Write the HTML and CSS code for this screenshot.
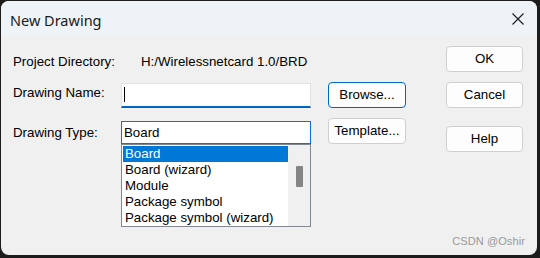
FILE: index.html
```html
<!DOCTYPE html>
<html>
<head>
<meta charset="utf-8">
<link rel="stylesheet" href="styles.css">
</head>
<body>
<div class="window">
  <div class="titlebar">
    <span class="title">New Drawing</span>
    <span class="close">
      <svg width="12" height="12" viewBox="0 0 12 12"><path d="M0.5 0.5 L11.5 11.5 M11.5 0.5 L0.5 11.5" stroke="#1a1a1a" stroke-width="1.1" fill="none"/></svg>
    </span>
  </div>
  <div class="body">
    <div class="form">
      <div class="row row-dir">
        <span class="label">Project Directory:</span>
        <span class="value">H:/Wirelessnetcard 1.0/BRD</span>
      </div>
      <div class="row row-name">
        <span class="label">Drawing Name:</span>
        <div class="input"><span class="caret"></span></div>
        <button class="btn btn-default">Browse...</button>
      </div>
      <div class="row row-type">
        <span class="label">Drawing Type:</span>
        <div class="combo-wrap">
          <div class="combo">Board</div>
          <div class="list">
            <div class="items">
              <div class="item selected">Board</div>
              <div class="item">Board (wizard)</div>
              <div class="item">Module</div>
              <div class="item">Package symbol</div>
              <div class="item">Package symbol (wizard)</div>
            </div>
            <div class="scrollbar"><div class="thumb"></div></div>
          </div>
        </div>
        <button class="btn">Template...</button>
      </div>
    </div>
    <div class="side">
      <button class="btn btn-ok">OK</button>
      <button class="btn btn-cancel">Cancel</button>
      <button class="btn btn-help">Help</button>
    </div>
  </div>
  <div class="watermark">CSDN @Oshir</div>
</div>
</body>
</html>
```

FILE: styles.css
```css
html, body {
  margin: 0;
  padding: 0;
  background: #1c1c1c;
  width: 540px;
  height: 258px;
  overflow: hidden;
}
.window {
  position: relative;
  margin: 1px 0 0 1px;
  width: 536px;
  height: 254px;
  border-radius: 8px;
  background: #f0f0f0;
  overflow: hidden;
  font-family: "Liberation Sans", Arial, sans-serif;
  font-size: 13.3px;
  color: #000;
}
.titlebar {
  height: 35px;
  box-sizing: border-box;
  padding: 2px 13px 0 9px;
  background: #eef3f8;
  display: flex;
  align-items: center;
  justify-content: space-between;
}
.title {
  font-family: "Noto Sans", "Open Sans", sans-serif;
  font-size: 14.5px;
  color: #1a1a1a;
}
.close {
  display: flex;
  width: 12px;
  height: 12px;
  margin-top: -1px;
}
.body {
  display: flex;
}
.form {
  padding: 12px 0 0 12px;
  display: flex;
  flex-direction: column;
}
.row {
  display: grid;
  grid-template-columns: 108px 207px 78px;
  align-items: start;
}
.row-dir {
  height: 28px;
  align-items: center;
}
.row-name {
  margin-top: 6px;
}
.row-type {
  margin-top: 10px;
}
.label {
  line-height: 16px;
}
.row-name .label {
  padding-top: 3px;
}
.row-type .label {
  padding-top: 7px;
}
.value {
  grid-column: 2 / 4;
  padding-left: 20px;
  line-height: 16px;
}
.input {
  margin-top: 1px;
  width: 190px;
  height: 25px;
  box-sizing: border-box;
  background: #fff;
  border: 1px solid #e3e3e3;
  border-bottom: 2px solid #0067c0;
  display: flex;
  align-items: flex-start;
}
.caret {
  margin: 3px 0 0 2px;
  width: 1px;
  height: 15px;
  background: #000;
}
.combo-wrap {
  width: 190px;
  margin-top: 3px;
  display: flex;
  flex-direction: column;
}
.combo {
  height: 23px;
  box-sizing: border-box;
  border: 1px solid #0078d7;
  background: #fff;
  padding-left: 2px;
  line-height: 21px;
}
.list {
  height: 83px;
  box-sizing: border-box;
  border: 1px solid #828790;
  background: #fff;
  display: flex;
}
.items {
  flex: 1;
  padding: 1px 0 0 1px;
}
.item {
  height: 16px;
  line-height: 16px;
  padding-left: 2px;
  white-space: nowrap;
}
.item.selected {
  background: #0078d7;
  color: #fff;
}
.scrollbar {
  width: 22px;
  background: #f0f0f0;
  display: flex;
  justify-content: center;
  padding-top: 21px;
  box-sizing: border-box;
}
.thumb {
  width: 7px;
  height: 21px;
  background: #858585;
  border-radius: 1px;
}
.btn {
  width: 78px;
  height: 26px;
  box-sizing: border-box;
  border: 1px solid #d0d0d0;
  border-radius: 4px;
  background: #fdfdfd;
  font-family: "Liberation Sans", Arial, sans-serif;
  font-size: 13.3px;
  color: #000;
  padding: 0;
  line-height: 24px;
  text-align: center;
}
.btn-default {
  border-color: #0067c0;
}
.side {
  margin-left: 40px;
  padding-top: 10px;
  display: flex;
  flex-direction: column;
}
.side .btn {
  width: 77px;
}
.btn-cancel {
  margin-top: 10px;
}
.btn-help {
  margin-top: 18px;
}
.watermark {
  position: absolute;
  right: 12px;
  bottom: 8px;
  font-family: "Liberation Sans", Arial, sans-serif;
  font-size: 11px;
  letter-spacing: 0.1px;
  color: #999999;
}
```
